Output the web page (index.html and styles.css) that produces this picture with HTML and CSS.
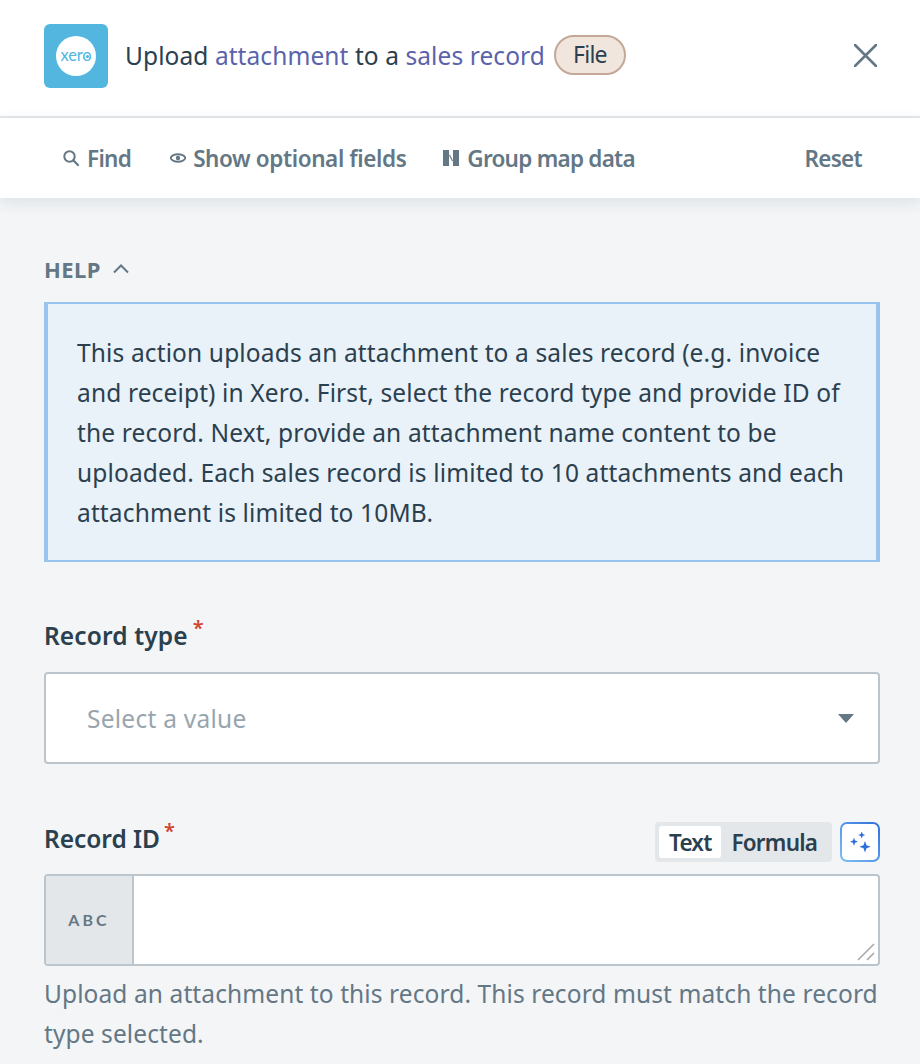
FILE: index.html
```html
<!DOCTYPE html>
<html lang="en">
<head>
<meta charset="utf-8">
<title>Upload attachment to a sales record</title>
<link rel="stylesheet" href="styles.css">
</head>
<body>
<div class="panel">
  <header class="header">
    <div class="logo"><div class="logo-circle"><span class="logo-text">xero</span></div></div>
    <div class="title">Upload <span class="kw">attachment</span> to a <span class="kw">sales record</span></div>
    <span class="pill">File</span>
    <button class="close" aria-label="Close">
      <svg width="23" height="23" viewBox="0 0 23 23"><path d="M1 1 L22 22 M22 1 L1 22" fill="none" stroke="#647785" stroke-width="2.6" stroke-linecap="round"/></svg>
    </button>
  </header>
  <nav class="toolbar">
    <div class="tool tool-find">
      <svg width="18" height="18" viewBox="0 0 18 18"><circle cx="7.5" cy="7.5" r="5.2" fill="none" stroke="#647785" stroke-width="2"/><path d="M11.5 11.5 L16 16" stroke="#647785" stroke-width="2.2" stroke-linecap="round"/></svg>
      <span>Find</span>
    </div>
    <div class="tool tool-opt">
      <svg width="16" height="12" viewBox="0 0 16 12"><path d="M0.5 6 C3 1 13 1 15.5 6 C13 11 3 11 0.5 6 Z" fill="none" stroke="#647785" stroke-width="1.8"/><circle cx="8" cy="6" r="2.2" fill="#647785"/></svg>
      <span>Show optional fields</span>
    </div>
    <div class="tool tool-group">
      <svg width="16" height="16" viewBox="0 0 16 16"><rect x="0" y="0" width="6" height="16" fill="#647785"/><rect x="10" y="0" width="6" height="16" fill="#647785"/><path d="M6.5 5 L9.5 11" stroke="#647785" stroke-width="1.1"/></svg>
      <span>Group map data</span>
    </div>
    <div class="tool reset"><span>Reset</span></div>
  </nav>
  <main class="content">
    <div class="help-head">
      <span>HELP</span>
      <svg width="16" height="10" viewBox="0 0 16 10"><path d="M1 8.5 L8 1.5 L15 8.5" fill="none" stroke="#647785" stroke-width="2"/></svg>
    </div>
    <div class="help-box">This action uploads an attachment to a sales record (e.g. invoice and receipt) in Xero. First, select the record type and provide ID of the record. Next, provide an attachment name content to be uploaded. Each sales record is limited to 10 attachments and each attachment is limited to 10MB.</div>
    <div class="label label-type">Record type<span class="req">*</span></div>
    <div class="select">
      <span class="placeholder">Select a value</span>
      <span class="caret"></span>
    </div>
    <div class="field-head">
      <div class="label label-id">Record ID<span class="req">*</span></div>
      <div class="seg-wrap">
        <div class="seg">
          <span class="seg-item active">Text</span>
          <span class="seg-item">Formula</span>
        </div>
        <button class="ai" aria-label="AI">
          <svg width="24" height="24" viewBox="0 0 24 24" fill="#2f6fdc">
            <path d="M13.7 1.5 L14.7 4 L17.2 5 L14.7 6 L13.7 8.5 L12.7 6 L10.2 5 L12.7 4 Z"/>
            <path d="M6 7.7 L7.1 10.6 L10 11.7 L7.1 12.8 L6 15.7 L4.9 12.8 L2 11.7 L4.9 10.6 Z"/>
            <path d="M17 11 L18.5 15.2 L22.7 16.7 L18.5 18.2 L17 22.4 L15.5 18.2 L11.3 16.7 L15.5 15.2 Z"/>
          </svg>
        </button>
      </div>
    </div>
    <div class="input">
      <div class="abc">ABC</div>
      <div class="area">
        <svg class="grip" width="18" height="18" viewBox="0 0 18 18"><path d="M1 17 L17 1 M10 17 L17 10" stroke="#a8a8a8" stroke-width="1.6"/></svg>
      </div>
    </div>
    <p class="hint">Upload an attachment to this record. This record must match the record type selected.</p>
  </main>
</div>
</body>
</html>
```
FILE: styles.css
```css
* { box-sizing: border-box; }
html, body { margin: 0; padding: 0; }
body {
  width: 920px;
  height: 1064px;
  overflow: hidden;
  background: #f3f5f7;
  font-family: "Noto Sans", "Open Sans", sans-serif;
  color: #2b404e;
}
.panel { width: 920px; }
.header {
  height: 118px;
  background: #fff;
  border-bottom: 2px solid #e5e8eb;
  display: flex;
  align-items: center;
  padding: 0 43px 6px 44px;
}
.logo {
  width: 64px;
  height: 64px;
  margin: 2px 17px 0 0;
  border-radius: 6px;
  background: #52b6df;
  display: flex;
  align-items: center;
  justify-content: center;
}
.logo-circle {
  width: 40px;
  height: 40px;
  border-radius: 50%;
  background: #fff;
  display: flex;
  align-items: center;
  justify-content: center;
}
.logo-text {
  position: relative;
  top: -1px;
  font-family: "Lato", sans-serif;
  font-size: 16.5px;
  font-weight: 400;
  line-height: 14px;
  color: #52b6df;
  letter-spacing: -.1px;
}
.logo-text::after {
  content: "";
  position: absolute;
  right: 3px;
  top: 7px;
  width: 3px;
  height: 3px;
  border-radius: 50%;
  background: #52b6df;
}
.title {
  font-size: 24.5px;
  letter-spacing: .08px;
  white-space: nowrap;
}
.kw { color: #5a63ab; }
.pill {
  margin-left: 9px;
  height: 40px;
  padding: 0 17px;
  border-radius: 20px;
  background: #f1e6de;
  border: 2px solid #c3a898;
  font-size: 23px;
  letter-spacing: -.7px;
  line-height: 34px;
}
.close {
  margin-left: auto;
  background: none;
  border: 0;
  padding: 0;
  width: 23px;
  height: 23px;
  display: block;
}
.toolbar {
  height: 80px;
  background: #fff;
  box-shadow: 0 4px 14px rgba(60, 80, 100, .12);
  display: flex;
  align-items: center;
  padding: 0 58px 0 62px;
  position: relative;
  font-size: 22.5px;
  font-weight: 600;
  color: #647785;
  letter-spacing: -.7px;
}
.tool { display: flex; align-items: center; gap: 7px; white-space: nowrap; }
.tool-opt { margin-left: 39px; letter-spacing: -.4px; }
.tool-group { margin-left: 37px; gap: 8px; letter-spacing: -.75px; }
.reset { margin-left: auto; }
.content { padding: 0 40px 0 44px; }
.help-head {
  margin-top: 57px;
  height: 28px;
  display: flex;
  align-items: center;
  gap: 12px;
  font-size: 22px;
  font-weight: 700;
  letter-spacing: .4px;
  color: #647785;
}
.help-box {
  margin-top: 19px;
  height: 260px;
  padding: 29px 28px 0 29px;
  background: #e9f1f9;
  border: solid #99c4ee;
  border-width: 2px 4px;
  font-size: 24.5px;
  line-height: 40px;
  letter-spacing: .14px;
  color: #2b404e;
}
.label {
  font-size: 24.5px;
  font-weight: 600;
  line-height: 34px;
  color: #2b404e;
  white-space: nowrap;
}
.label-type { margin-top: 57px; height: 35px; letter-spacing: .12px; }
.label-type .req { margin-left: 5px; }
.label-id { margin-top: -4px; letter-spacing: -.05px; }
.req {
  color: #d0452f;
  font-size: 20px;
  font-weight: 600;
  position: relative;
  top: -10px;
  margin-left: 4px;
}
.select {
  margin-top: 18px;
  height: 92px;
  background: #fff;
  border: 2px solid #bcc5cc;
  border-radius: 4px;
  display: flex;
  align-items: center;
  padding: 0 24px 0 41px;
  justify-content: space-between;
}
.placeholder {
  font-size: 24.5px;
  letter-spacing: .25px;
  color: #98a5ae;
}
.caret {
  width: 0;
  height: 0;
  border-left: 8px solid transparent;
  border-right: 8px solid transparent;
  border-top: 9px solid #647785;
}
.field-head {
  margin-top: 58px;
  height: 40px;
  display: flex;
  justify-content: space-between;
  align-items: center;
}
.seg-wrap { display: flex; gap: 8px; }
.seg {
  width: 177px;
  height: 40px;
  padding: 4px;
  background: #e4e7ea;
  border-radius: 4px;
  display: flex;
  font-size: 22.5px;
  font-weight: 600;
  letter-spacing: -.8px;
  color: #2b404e;
}
.seg-item { padding: 0 10px; line-height: 34px; white-space: nowrap; }
.seg-item.active { background: #fff; border-radius: 3px; }
.ai {
  width: 40px;
  height: 40px;
  padding: 0;
  border-radius: 7px;
  border: 2px solid transparent;
  background: linear-gradient(#fff, #fff) padding-box, linear-gradient(45deg, #7fc0f5, #2f6fdc) border-box;
  display: flex;
  align-items: center;
  justify-content: center;
}
.input {
  margin-top: 12px;
  height: 92px;
  display: flex;
  background: #fff;
  border: 2px solid #bcc5cc;
  border-radius: 4px;
}
.abc {
  width: 88px;
  padding-bottom: 2px;
  background: #e4e7ea;
  border-right: 2px solid #bcc5cc;
  border-radius: 2px 0 0 2px;
  display: flex;
  align-items: center;
  justify-content: center;
  font-family: "Lato", sans-serif;
  font-size: 16px;
  font-weight: 700;
  letter-spacing: 3.1px;
  color: #647785;
}
.area { flex: 1; position: relative; }
.grip { position: absolute; right: 3px; bottom: 3px; }
.hint {
  margin: 8px 0 0;
  font-size: 24.5px;
  line-height: 40px;
  letter-spacing: .1px;
  color: #647785;
}
```
